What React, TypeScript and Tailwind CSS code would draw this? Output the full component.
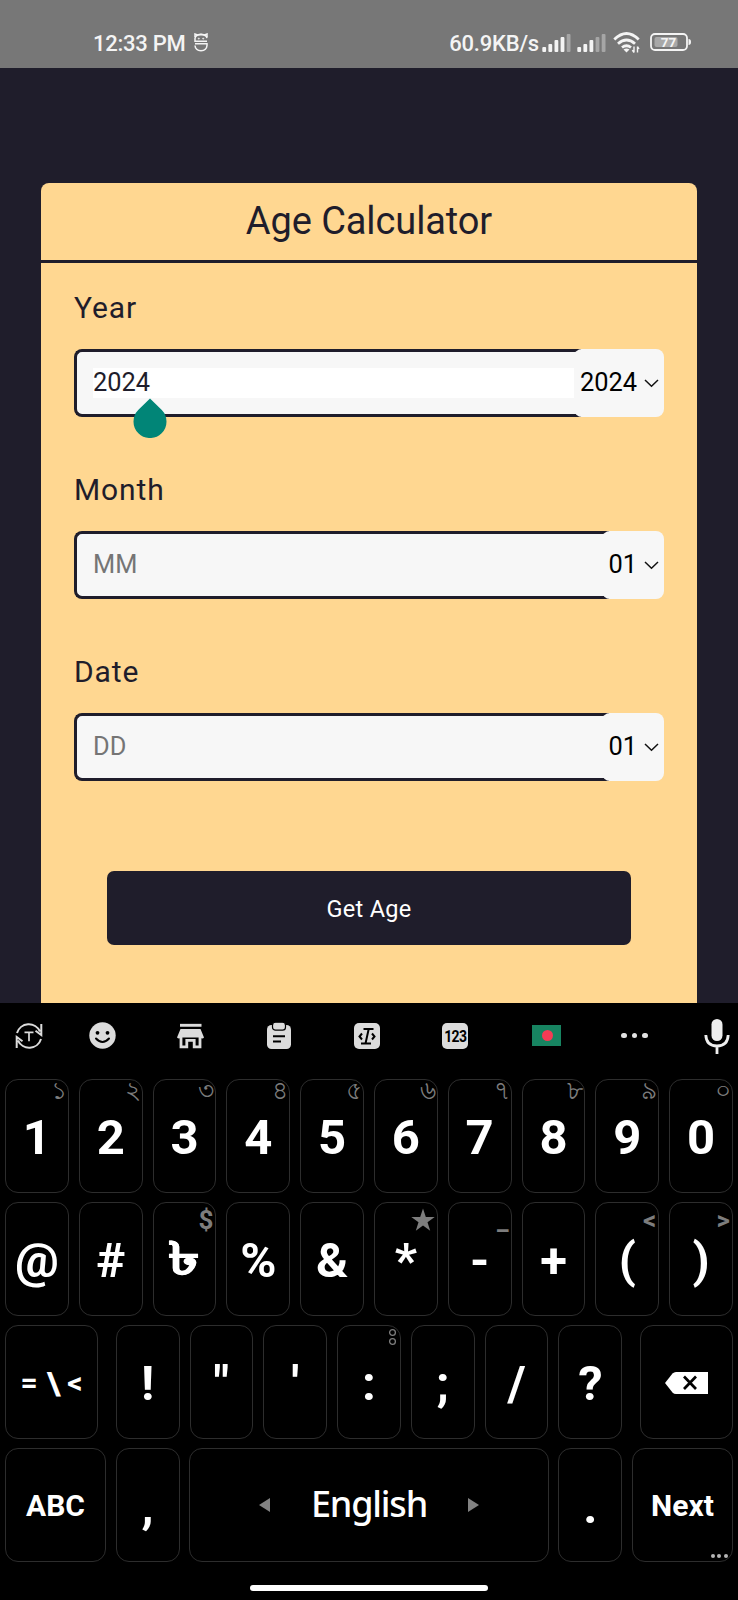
import type { ReactNode } from "react";

type KeyProps = {
  children: ReactNode;
  hint?: ReactNode;
  symbolHint?: boolean;
  className?: string;
};

function Key({ children, hint, symbolHint = false, className = "w-[63.8px] pt-[3px] text-[49px]" }: KeyProps) {
  return (
    <div
      className={`relative flex h-[114px] shrink-0 items-center justify-center rounded-[13px] border border-[#2d2d2d] font-bold leading-none text-white ${className}`}
    >
      {children}
      {hint && (
        <span
          className={
            symbolHint
              ? "absolute right-[2px] top-[4px] text-[26px] font-bold leading-none text-[#7d7d7d]"
              : "absolute -top-[2px] right-px text-[25px] font-medium leading-none text-[#7d7d7d]"
          }
        >
          {hint}
        </span>
      )}
    </div>
  );
}

function Field({
  label,
  value,
  placeholder,
  selected,
  active = false,
}: {
  label: string;
  value?: string;
  placeholder?: string;
  selected: string;
  active?: boolean;
}) {
  return (
    <div className="flex h-[182px] flex-col">
      <label className="mt-[25px] h-[40px] text-[30px] leading-[40px] tracking-[0.9px] text-[#1f1d2b]">
        {label}
      </label>
      <div className="mt-[21px] flex h-[68px] items-stretch">
        <div className="relative -mr-[7px] flex flex-1 items-center rounded-l-[8px] border-[3px] border-r-0 border-[#1f1d2b] bg-[#f7f7f7] pl-[16px] text-[25.4px]">
          <div
            className={
              active
                ? "h-[30px] flex-1 bg-white leading-[29px] text-[#1f1d2b]"
                : "h-[30px] flex-1 leading-[29px] text-[#757575]"
            }
          >
            {value ?? placeholder}
          </div>
          {active && (
            <svg className="absolute left-[55.5px] top-[45.5px]" width="34" height="40" viewBox="0 0 34 40">
              <path d="M17 .5 28.8 12A16.5 16.5 0 1 1 5.200 12Z" fill="#018577" />
            </svg>
          )}
        </div>
        <div className="relative flex items-center gap-[7px] rounded-[8px] bg-[#f7f7f7] pl-[6px] pr-[5px] text-[25.4px] leading-[31px] text-black">
          <span className="-mt-[2px]">{selected}</span>
          <svg width="15" height="9" viewBox="0 0 15 9" fill="none" stroke="#111" strokeWidth="1.500">
            <path d="m1 1 6.500 6.300L14 1" />
          </svg>
        </div>
      </div>
    </div>
  );
}

function Signal({ lit }: { lit: number }) {
  const bars = [5, 8, 12, 15, 18];
  return (
    <svg width="29" height="19" viewBox="0 0 29 19">
      {bars.map((h, i) => (
        <rect key={h} x={i * 6.1 + 0.3} y={19 - h} width="3.800" height={h} rx="1" fill={i < lit ? "#f4f4f4" : "#a6a6a6"} />
      ))}
    </svg>
  );
}

function StatusBar() {
  return (
    <div className="flex h-[68px] items-start bg-[#777] pl-[93px] pr-[47px] pt-[29px] text-[22px] font-medium leading-[30px] text-[#f4f4f4]">
      <span className="tracking-[-0.25px]">12:33 PM</span>
      <svg className="ml-[8px] mt-[4px]" width="14" height="19" viewBox="0 0 14 19" fill="none" stroke="#f4f4f4" strokeWidth="1.500">
        <path d="M1 4V1l2.500 1Q7 .6 10.500 2L13 1v3" />
        <path d="M13 8.200H1V5.500Q1.200 2 7 1.600q5.500.4 6 3.600M1 10.800h12v1.700q-.4 5-6 5.300-5.600-.3-6-5.300" />
        <circle cx="4.800" cy="5.600" r=".6" fill="#f4f4f4" strokeWidth="0.600" />
        <circle cx="9.200" cy="5.600" r=".6" fill="#f4f4f4" strokeWidth="0.600" />
      </svg>
      <span className="ml-auto tracking-[-0.2px]">60.9KB/s</span>
      <span className="ml-[3px] mt-[4px] flex">
        <Signal lit={4} />
      </span>
      <span className="ml-[6px] mt-[4px] flex">
        <Signal lit={3} />
      </span>
      <svg className="ml-[7px] mt-[3px]" width="28" height="21" viewBox="0 0 28 21" fill="none" stroke="#f4f4f4" strokeWidth="2.800">
        <path d="M1.300 7.500Q13.500-4.500 25.700 7.500M5 11.800q8.500-7.600 17 0M9 15.500q4.500-3.600 9 0" />
        <path d="m10.500 17.500 3 3 3-3q-3-2-6 0" fill="#f4f4f4" stroke="none" />
        <path d="M21 14.500v6M24.500 14.500v6M19.300 18.200 21 20.500M26 17l-1.500-2.500" strokeWidth="1.400" />
      </svg>
      <svg className="ml-[9px] mt-[4px]" width="41" height="18" viewBox="0 0 41 18">
        <rect x="1" y="1" width="36" height="16" rx="4" fill="none" stroke="#f4f4f4" strokeWidth="1.800" />
        <rect x="4.500" y="4" width="23" height="10" rx="2" fill="#a8a8a8" />
        <path d="M38.500 6q2.500 0 2.500 3t-2.500 3Z" fill="#f4f4f4" />
        <text x="18.500" y="14" textAnchor="middle" fontSize="13.500" fontWeight="700" fill="#f4f4f4">
          77
        </text>
      </svg>
    </div>
  );
}

function Tool({ children }: { children: ReactNode }) {
  return <div className="flex w-[88.4px] justify-center">{children}</div>;
}

function Toolbar() {
  return (
    <div className="flex h-[65px] items-center">
      <div className="flex w-[58px] justify-center">
        <svg width="28" height="28" viewBox="0 0 28 28" fill="none" stroke="#dcdcdc" strokeWidth="2">
          <path d="M2 11A12.300 12.300 0 0 1 25 9.500M26.300 2v11L20.500 8.800M26 17A12.300 12.300 0 0 1 3 18.500M1.700 26V15l5.800 4.200" />
          <path d="M9.500 10.300h9M14 10.300v9" strokeWidth="1.700" />
        </svg>
      </div>
      <Tool>
        <svg width="27" height="27" viewBox="0 0 27 27">
          <circle cx="13.500" cy="13.500" r="13.200" fill="#dcdcdc" />
          <circle cx="8.500" cy="10.800" r="1.900" fill="#000" />
          <circle cx="18.500" cy="10.800" r="1.900" fill="#000" />
          <path d="M7 16.500q6.500 7 13 0" fill="none" stroke="#000" strokeWidth="2" strokeLinecap="round" />
        </svg>
      </Tool>
      <Tool>
        <svg width="27" height="26" viewBox="0 0 27 26" fill="none" stroke="#dcdcdc">
          <path d="M3 2.300h21.500" strokeWidth="2.900" />
          <path d="M3.500 6h20l3.500 8.500q-1.500 1.800-4 0h-19q-2 1.800-4 0Z" fill="#dcdcdc" stroke="none" />
          <path d="M4 13v10.800h5.800v-6.500h7.400v6.500H23V13" strokeWidth="2.800" />
        </svg>
      </Tool>
      <Tool>
        <svg width="24" height="27" viewBox="0 0 24 27">
          <rect y="3" width="24" height="24" rx="4.500" fill="#dcdcdc" />
          <rect x="5.500" y=".2" width="13" height="8" rx="3" fill="#dcdcdc" stroke="#000" strokeWidth="1.200" />
          <path d="M6 14.200h12M6 19.500h8" stroke="#000" strokeWidth="2" />
        </svg>
      </Tool>
      <Tool>
        <svg width="26" height="26" viewBox="0 0 26 26">
          <rect width="26" height="26" rx="5" fill="#dcdcdc" />
          <path d="M9.500 6h10M7 20.500h10M14.700 6l-3.200 14.500M8 10.500l-2.500 3 2.500 3M18 10.500l2.500 3-2.500 3" fill="none" stroke="#000" strokeWidth="2" />
        </svg>
      </Tool>
      <Tool>
        <div className="-ml-px flex h-[26px] w-[26px] items-center justify-center rounded-[5px] bg-[#dcdcdc] text-[14px] font-bold leading-none tracking-[-0.7px] text-black">
          <span className="scale-y-[1.15]">123</span>
        </div>
      </Tool>
      <Tool>
        <div className="ml-[4px] flex h-[21px] w-[29px] items-center justify-center bg-[#178461]">
          <div className="mr-[-2px] h-[11px] w-[11px] rounded-full bg-[#f43b55]" />
        </div>
      </Tool>
      <Tool>
        <div className="ml-[4px] flex gap-[5px]">
          <i className="h-[5.500px] w-[5.500px] rounded-full bg-[#e2e2e2]" />
          <i className="h-[5.500px] w-[5.500px] rounded-full bg-[#e2e2e2]" />
          <i className="h-[5.500px] w-[5.500px] rounded-full bg-[#e2e2e2]" />
        </div>
      </Tool>
      <svg className="ml-[27px]" width="26" height="36" viewBox="0 0 26 36" fill="none">
        <rect x="7.500" y="1" width="11" height="22" rx="5.500" fill="#efefef" />
        <path d="M1.800 17q.5 11 11.200 11t11.200-11M13 28v8" stroke="#efefef" strokeWidth="2.800" />
      </svg>
    </div>
  );
}

const digits = ["1", "2", "3", "4", "5", "6", "7", "8", "9", "0"];
const bengali = ["১", "২", "৩", "৪", "৫", "৬", "৭", "৮", "৯", "০"];

function Keyboard() {
  return (
    <div className="h-[597px] bg-black">
      <Toolbar />
      <div className="flex flex-col gap-[9px] px-[5px] pt-[11px]">
        <div className="flex gap-[10px]">
          {digits.map((d, i) => (
            <Key key={d} hint={bengali[i]} className="w-[63.8px] pt-[2px] text-[49px]">
              {d}
            </Key>
          ))}
        </div>
        <div className="flex gap-[10px]">
          <Key>@</Key>
          <Key>#</Key>
          <Key hint="$" symbolHint>
            <span className="-mt-[5px] scale-x-[1.3] scale-y-[0.92] [-webkit-text-stroke:0.7px_white]">৳</span>
          </Key>
          <Key>%</Key>
          <Key>&amp;</Key>
          <Key
            symbolHint
            hint={
              <svg className="mt-px" width="24" height="24" viewBox="0 0 24 24">
                <path d="m12 .5 2.800 8.500h8.900l-7.200 5.200 2.700 8.600-7.200-5.300-7.200 5.300 2.700-8.600L.3 9h8.900Z" fill="#7d7d7d" />
              </svg>
            }
          >
            *
          </Key>
          <Key hint="_" symbolHint>-</Key>
          <Key>+</Key>
          <Key hint="<" symbolHint>(</Key>
          <Key hint=">" symbolHint>)</Key>
        </div>
        <div className="flex justify-between">
          <Key className="w-[93px] pt-px text-[30px]">
            <span className="flex items-center gap-[7px]">
              <span className="mr-[2px]">=</span>
              <span className="text-[32px]">\</span>
              <span>&lt;</span>
            </span>
          </Key>
          <div className="flex gap-[10px]">
            <Key>!</Key>
            <Key>"</Key>
            <Key>'</Key>
            <Key
              hint={
                <svg className="mr-px mt-[3px]" width="10" height="20" viewBox="0 0 10 20" fill="none" stroke="#7d7d7d" strokeWidth="1.300">
                  <circle cx="4.500" cy="5.500" r="2.900" />
                  <circle cx="4.500" cy="14.500" r="2.900" />
                </svg>
              }
            >
              :
            </Key>
            <Key>;</Key>
            <Key>/</Key>
            <Key>?</Key>
          </div>
          <Key className="w-[93px] pt-[2px]">
            <svg width="43" height="22" viewBox="0 0 43 22">
              <path d="M0 11 7.500 1.500Q9 0 11 0h32v22H11q-2 0-3.500-1.500Z" fill="#fff" />
              <path d="m19 4.500 12 12.500M31 4.500 19 17" stroke="#000" strokeWidth="2.700" />
            </svg>
          </Key>
        </div>
        <div className="flex justify-between">
          <Key className="w-[101px] pt-px text-[30px]">ABC</Key>
          <Key>,</Key>
          <Key className="w-[359.400px] gap-[41px]">
            <svg width="11" height="14" viewBox="0 0 11 14">
              <path d="M0 7 11 0v14Z" fill="#828282" />
            </svg>
            <span className="-mt-[2px] font-['Noto_Sans',sans-serif] text-[36px] font-medium leading-none tracking-[-1.2px]">
              English
            </span>
            <svg width="11" height="14" viewBox="0 0 11 14">
              <path d="M11 7 0 0v14Z" fill="#828282" />
            </svg>
          </Key>
          <Key>.</Key>
          <div className="relative">
            <Key className="w-[101px] pt-px text-[30px]">Next</Key>
            <div className="absolute bottom-[4px] right-[5px] flex gap-[2.500px]">
              <i className="h-[4px] w-[4px] rounded-full bg-[#b5b5b5]" />
              <i className="h-[4px] w-[4px] rounded-full bg-[#b5b5b5]" />
              <i className="h-[4px] w-[4px] rounded-full bg-[#b5b5b5]" />
            </div>
          </div>
        </div>
      </div>
      <div className="mx-auto mt-[23px] h-[6px] w-[238px] rounded-full bg-white" />
    </div>
  );
}

export default function App() {
  return (
    <div className="flex h-[1600px] w-[738px] flex-col overflow-hidden bg-[#1f1d2b] font-[Roboto,'Noto_Sans',sans-serif]">
      <StatusBar />
      <main className="mx-[41px] mt-[115px] flex h-[820px] flex-col rounded-t-[8px] bg-[#ffd791]">
        <h1 className="h-[80px] border-b-[3px] border-[#1f1d2b] text-center text-[38px] leading-[77px] tracking-[-0.1px] text-[#1f1d2b]">
          Age Calculator
        </h1>
        <div className="px-[33px]">
          <Field label="Year" value="2024" selected="2024" active />
          <Field label="Month" placeholder="MM" selected="01" />
          <Field label="Date" placeholder="DD" selected="01" />
        </div>
        <button className="mx-auto mt-[62px] h-[74px] w-[524px] rounded-[7px] bg-[#1f1d2b] pt-[3px] text-[23.5px] tracking-[0.3px] text-white">
          Get Age
        </button>
      </main>
      <Keyboard />
    </div>
  );
}
